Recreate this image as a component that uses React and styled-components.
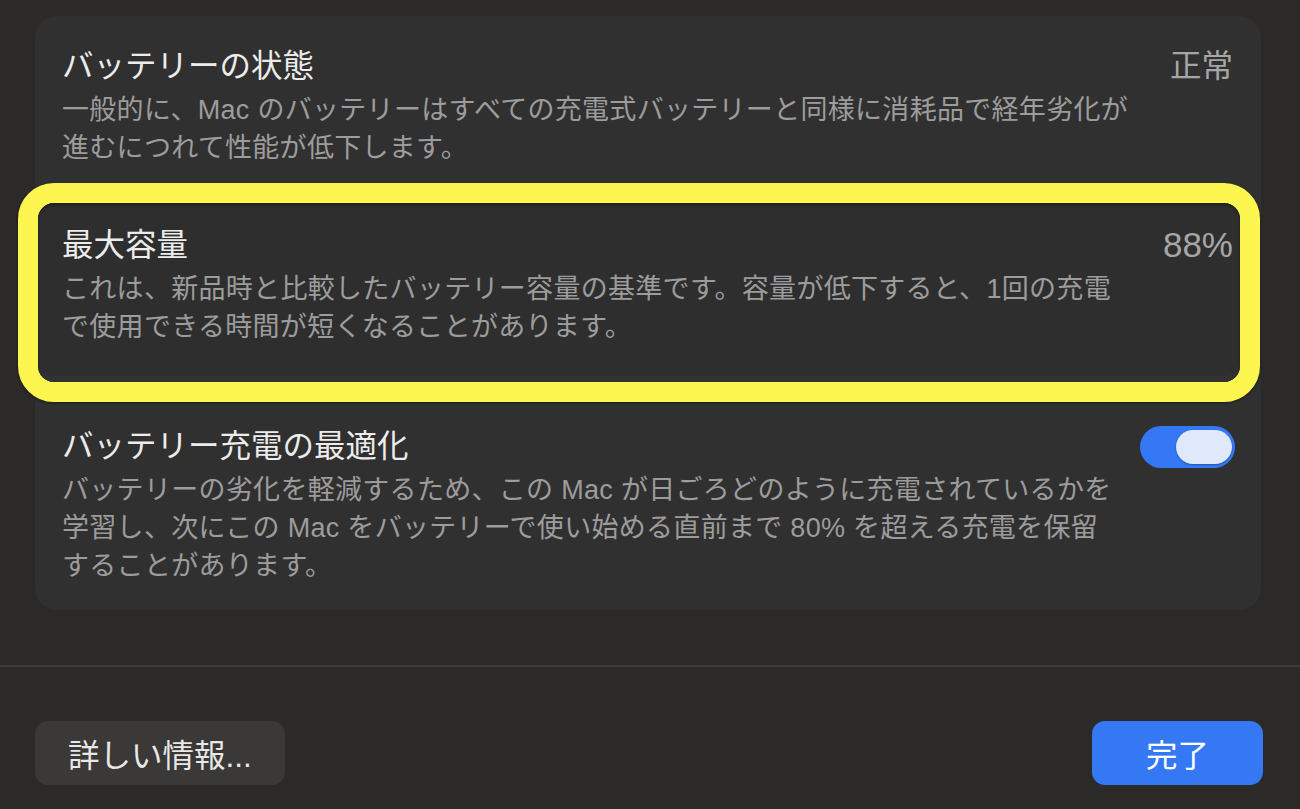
import React from "react";
import styled, { createGlobalStyle } from "styled-components";

const GlobalStyle = createGlobalStyle`
  html, body {
    margin: 0;
    padding: 0;
    background: #2b2a29;
    height: 809px;
    overflow: hidden;
  }
  body {
    font-family: "Liberation Sans", "Noto Sans CJK JP", sans-serif;
    -webkit-font-smoothing: antialiased;
  }
`;

// settings rows
const rows = [
  {
    id: "state",
    title: "バッテリーの状態",
    value: "正常",
    lines: [
      "一般的に、Mac のバッテリーはすべての充電式バッテリーと同様に消耗品で経年劣化が",
      "進むにつれて性能が低下します。",
    ],
  },
  {
    id: "capacity",
    title: "最大容量",
    value: "88%",
    lines: [
      "これは、新品時と比較したバッテリー容量の基準です。容量が低下すると、1回の充電",
      "で使用できる時間が短くなることがあります。",
    ],
  },
  {
    id: "optimize",
    title: "バッテリー充電の最適化",
    toggle: true,
    lines: [
      "バッテリーの劣化を軽減するため、この Mac が日ごろどのように充電されているかを",
      "学習し、次にこの Mac をバッテリーで使い始める直前まで 80% を超える充電を保留",
      "することがあります。",
    ],
  },
];

const Page = styled.div`
  display: flex;
  flex-direction: column;
  height: 809px;
  padding-top: 16px;
  box-sizing: border-box;
`;

const Card = styled.section`
  margin: 0 39px 0 35px;
  background: #313030;
  border-radius: 22px;
  display: flex;
  flex-direction: column;
`;

const Row = styled.div`
  display: flex;
  justify-content: space-between;
  align-items: flex-start;
  padding: ${(p) => p.$pad};
`;

const Highlight = styled.div`
  margin: 0 1px 0 -17px;
  border: 20px solid #fdf651;
  border-radius: 36px;
  box-shadow: 0 1px 3px rgba(0, 0, 0, 0.45);
  & > div {
    background: #2f2e2e;
    border-radius: 16px;
    box-shadow: inset 0 2px 3px rgba(0, 0, 0, 0.35),
      inset 0 -6px 0 rgba(255, 255, 255, 0.02);
  }
`;

const Text = styled.div`
  display: flex;
  flex-direction: column;
`;

const Title = styled.h3`
  margin: 0 0 3px;
  font-size: 31.5px;
  line-height: 44px;
  font-weight: 400;
  color: #ececec;
`;

const Desc = styled.p`
  margin: 0;
  font-size: 27px;
  line-height: 38px;
  letter-spacing: 0.3px;
  color: #9c9c9c;
  white-space: nowrap;
`;

const Value = styled.span`
  font-size: ${(p) => p.$size}px;
  line-height: 44px;
  color: #a6a6a6;
  white-space: nowrap;
`;

const Toggle = styled.div`
  width: 95px;
  height: 42px;
  margin: 2px -2px 0 0;
  box-sizing: border-box;
  padding: 4px 3px;
  border-radius: 21px;
  background: #3478f6;
  display: flex;
  justify-content: flex-end;
`;

const Knob = styled.span`
  width: 56px;
  height: 34px;
  border-radius: 17px;
  background: #dfe9fb;
  box-shadow: 0 1px 2px rgba(0, 0, 0, 0.3);
`;

const Footer = styled.footer`
  margin-top: 55px;
  border-top: 2px solid #3c3b3a;
  display: flex;
  justify-content: space-between;
  padding: 54px 37px 0 35px;
`;

const Button = styled.button`
  height: 64px;
  min-width: ${(p) => (p.$primary ? "171px" : "0")};
  padding: 0 33px;
  border: none;
  border-radius: 13px;
  font-family: inherit;
  font-size: 31.5px;
  color: ${(p) => (p.$primary ? "#ffffff" : "#e8e8e8")};
  background: ${(p) => (p.$primary ? "#3478f3" : "#3a3938")};
  cursor: pointer;
`;

const Item = ({ row, pad }) => (
  <Row $pad={pad}>
    <Text>
      <Title>{row.title}</Title>
      {row.lines.map((line) => (
        <Desc key={line}>{line}</Desc>
      ))}
    </Text>
    {row.value && (
      <Value $size={/^[0-9]/.test(row.value) ? 35 : 31.5}>{row.value}</Value>
    )}
    {row.toggle && (
      <Toggle>
        <Knob />
      </Toggle>
    )}
  </Row>
);

const App = () => {
  return (
    <>
      <GlobalStyle />
      <Page>
        <Card>
          <Item row={rows[0]} pad="28px 28px 16px 27px" />
          <Highlight>
            <Item row={rows[1]} pad="20px 7px 36px 24px" />
          </Highlight>
          <Item row={rows[2]} pad="22px 28px 25px 27px" />
        </Card>
        <Footer>
          <Button>詳しい情報...</Button>
          <Button $primary>完了</Button>
        </Footer>
      </Page>
    </>
  );
};

export default App;
